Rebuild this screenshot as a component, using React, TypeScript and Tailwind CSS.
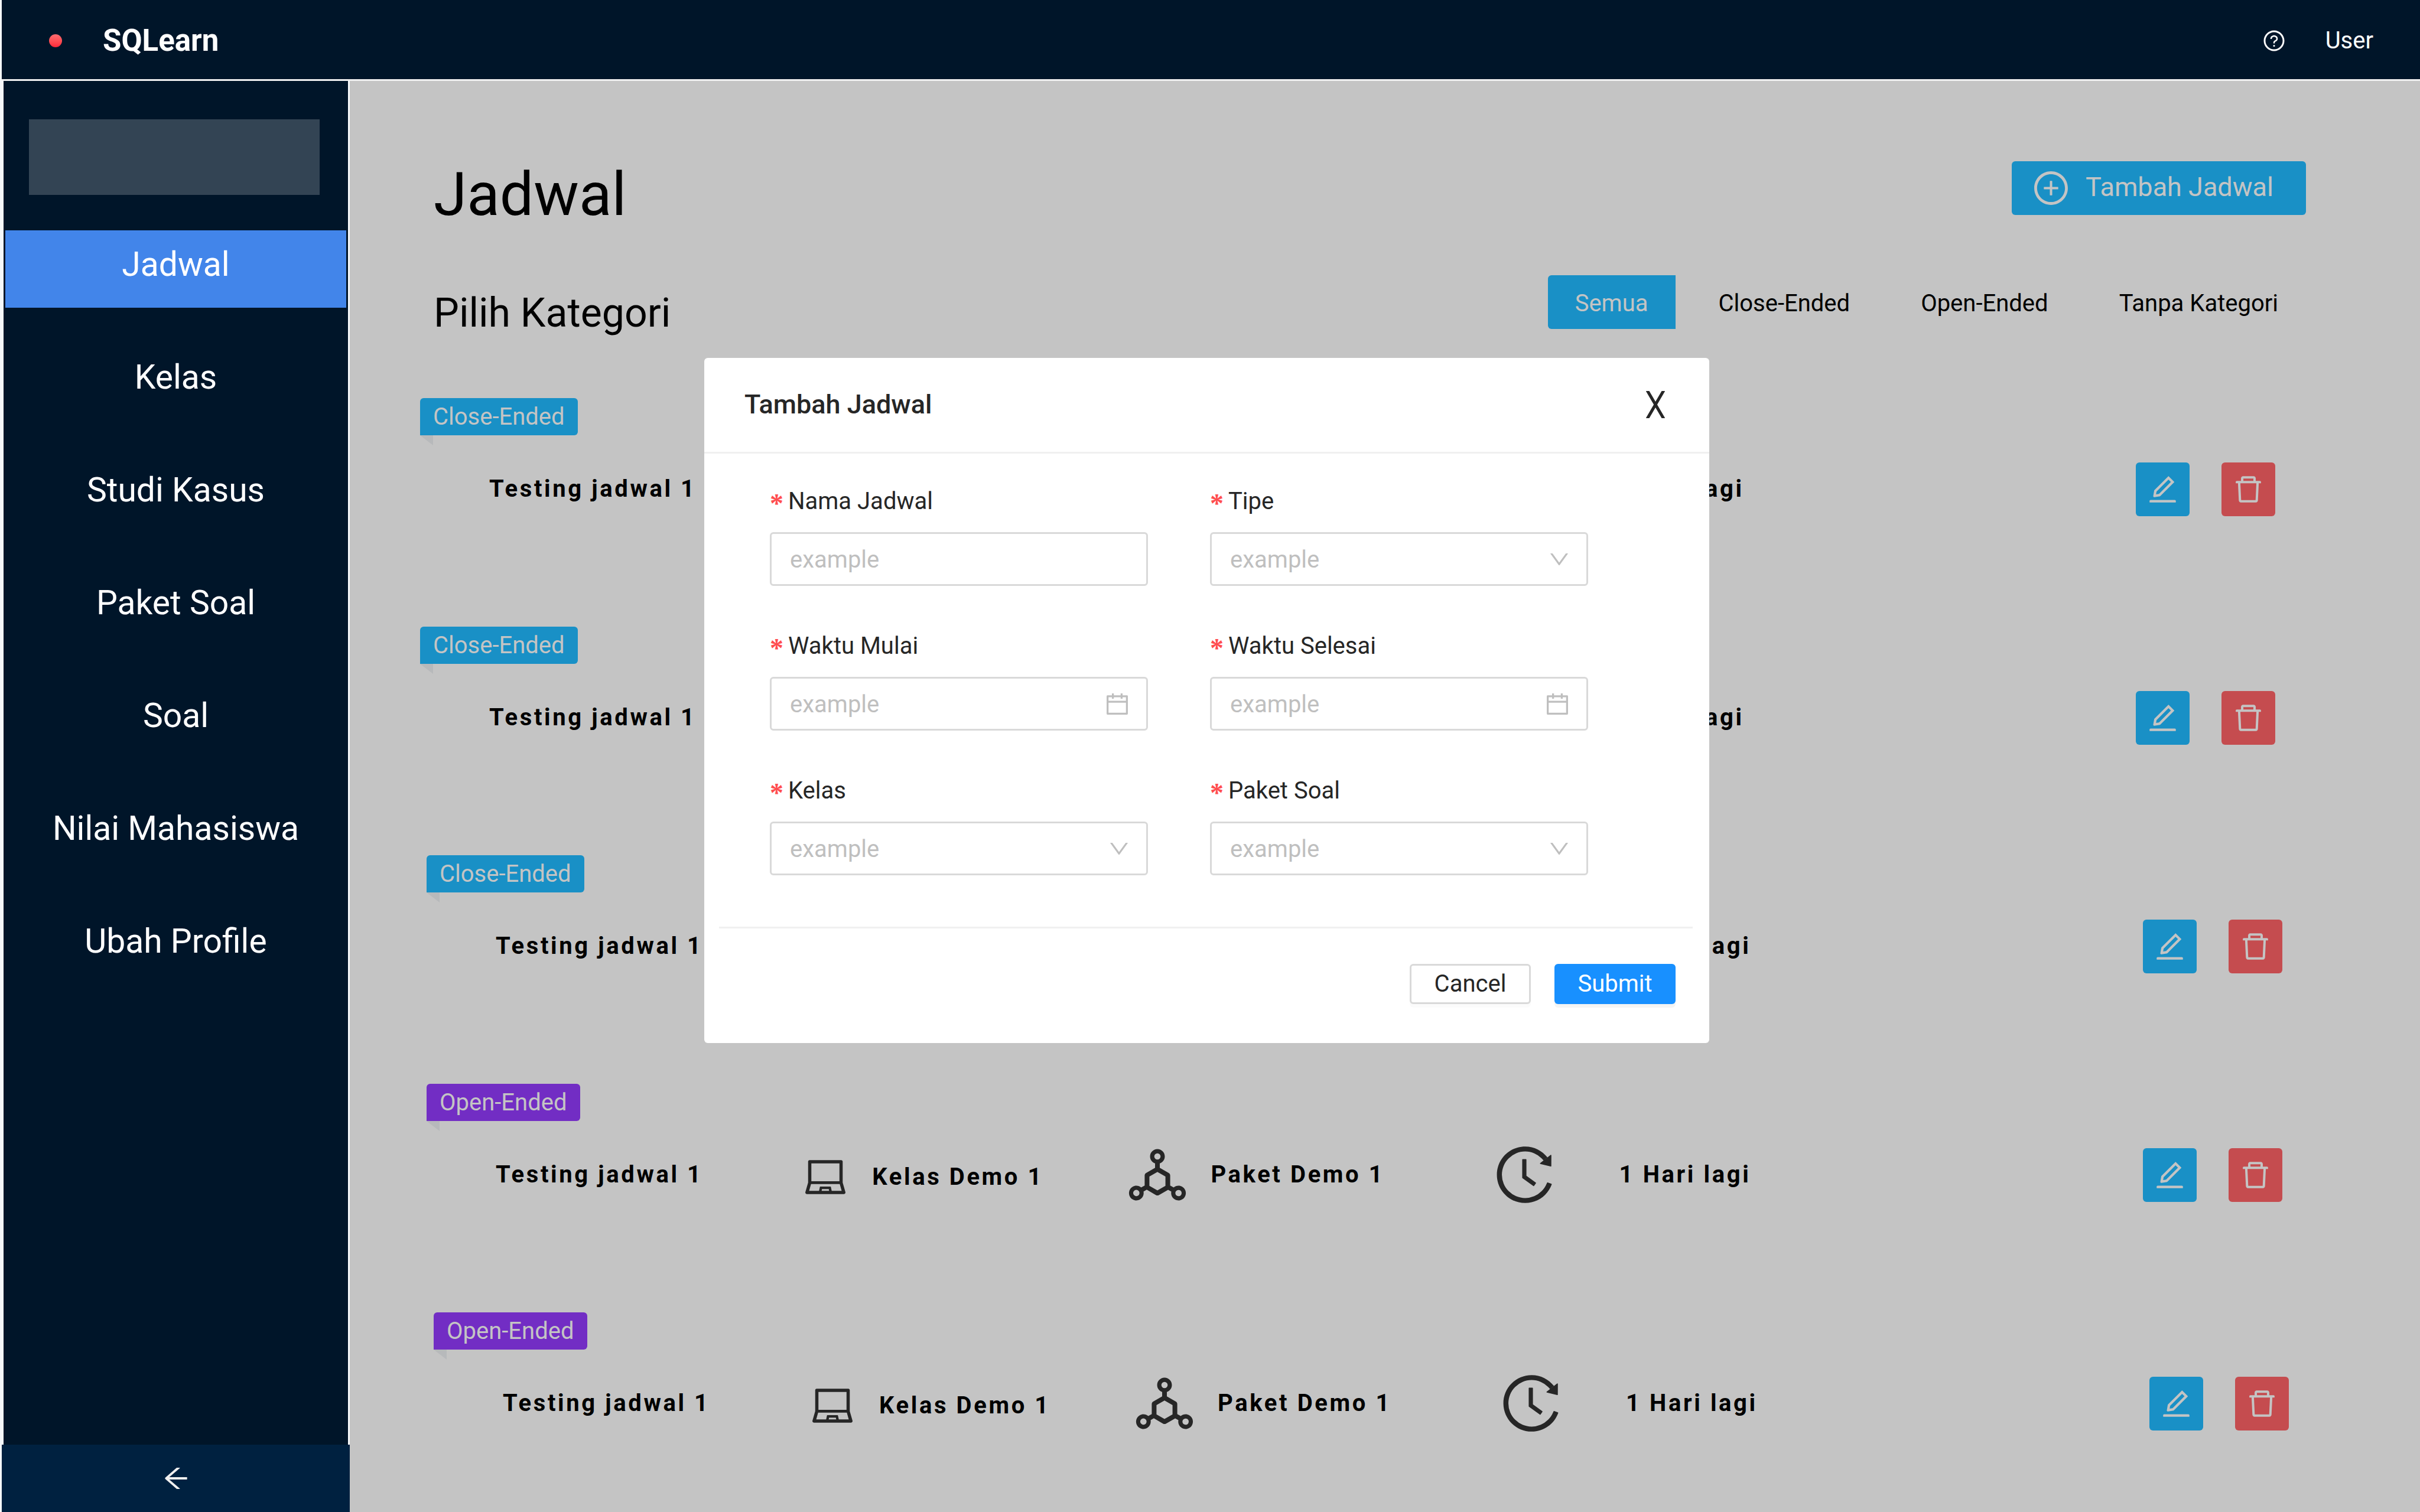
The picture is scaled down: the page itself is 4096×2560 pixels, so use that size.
import React from "react";
import {
  AiOutlineArrowLeft,
  AiOutlineCalendar,
  AiOutlineDelete,
  AiOutlineDeploymentUnit,
  AiOutlineDown,
  AiOutlineEdit,
  AiOutlineHistory,
  AiOutlineLaptop,
  AiOutlinePlusCircle,
  AiOutlineQuestionCircle,
} from "react-icons/ai";

const menu = ["Jadwal", "Kelas", "Studi Kasus", "Paket Soal", "Soal", "Nilai Mahasiswa", "Ubah Profile"];

const categories = ["Close-Ended", "Open-Ended", "Tanpa Kategori"];

type Kind = "Close-Ended" | "Open-Ended";

const schedules: { id: number; kind: Kind; inset: string }[] = [
  { id: 1, kind: "Close-Ended", inset: "pl-[119px] pr-[245px]" },
  { id: 2, kind: "Close-Ended", inset: "pl-[119px] pr-[245px]" },
  { id: 3, kind: "Close-Ended", inset: "pl-[130px] pr-[233px]" },
  { id: 4, kind: "Open-Ended", inset: "pl-[130px] pr-[233px]" },
  { id: 5, kind: "Open-Ended", inset: "pl-[142px] pr-[222px]" },
];

type Field = { id: string; label: string; type: "text" | "select" | "date" };

const fields: Field[] = [
  { id: "nama", label: "Nama Jadwal", type: "text" },
  { id: "tipe", label: "Tipe", type: "select" },
  { id: "mulai", label: "Waktu Mulai", type: "date" },
  { id: "selesai", label: "Waktu Selesai", type: "date" },
  { id: "kelas", label: "Kelas", type: "select" },
  { id: "paket", label: "Paket Soal", type: "select" },
];

function TopBar() {
  return (
    <header className="flex h-[137px] items-center justify-between border-b-[3px] border-[#f0f0f0] bg-[#001529] pt-[3px] pr-[79px] pl-20 text-white">
      <div className="flex items-center gap-[69px]">
        <span className="size-[22px] rounded-full bg-linear-to-b from-[#ff6b70] to-[#ff2438]" />
        <span className="text-[51px] leading-[60px] font-bold">SQLearn</span>
      </div>
      <div className="flex items-center gap-[67px]">
        <button type="button" aria-label="Bantuan">
          <AiOutlineQuestionCircle className="size-10" />
        </button>
        <a href="#user" className="text-[40px] leading-[60px]">
          User
        </a>
      </div>
    </header>
  );
}

function Sidebar() {
  return (
    <aside className="flex w-[589px] shrink-0 flex-col bg-[#001529]">
      <div className="flex grow flex-col border-x-[3px] border-[#f5f8fa] px-[3px] pt-[65px]">
        <div className="mr-[45px] ml-10 h-32 bg-[#334454]" />
        <nav className="mt-[60px]">
          <ul className="flex flex-col gap-[60px]">
            {menu.map((item, i) => (
              <li key={item}>
                <a
                  href={"#" + item}
                  className={
                    "flex h-[131px] items-center justify-center pb-4 text-[57px] leading-20 text-white " +
                    (i === 0 ? "bg-[#4285ea]" : "")
                  }
                >
                  {item}
                </a>
              </li>
            ))}
          </ul>
        </nav>
      </div>
      <button type="button" aria-label="Tutup menu" className="flex h-[114px] items-center justify-center bg-[#002140] text-[#f0f0f0]">
        <AiOutlineArrowLeft className="size-[52px]" />
      </button>
    </aside>
  );
}

function Tag({ kind }: { kind: Kind }) {
  return (
    <span
      className={
        "relative flex h-[63px] w-fit items-center rounded-md rounded-bl-none px-[22px] text-[40px] leading-[60px] text-[#c4c4c4] " +
        (kind === "Close-Ended" ? "bg-[#1990c6]" : "bg-[#722dc4]")
      }
    >
      {kind}
      <svg viewBox="0 0 22 17" className="absolute top-full left-0 h-[17px] w-[22px]" fill="#b7b9bb">
        <path d="M0 0H22V17Z" />
      </svg>
    </span>
  );
}

function ScheduleRow({ kind, inset }: { kind: Kind; inset: string }) {
  return (
    <li className={inset}>
      <Tag kind={kind} />
      <div className="mt-[34px] grid h-[114px] grid-cols-[636fr_544fr_620fr_1104fr_auto] items-center text-[40px] leading-[60px] font-bold tracking-[0.09em] whitespace-nowrap text-black">
        <span className="pl-[117px]">Testing jadwal 1</span>
        <span className="flex items-center gap-10 pt-2">
          <AiOutlineLaptop className="size-[78px] text-[#262626]" />
          Kelas Demo 1
        </span>
        <span className="flex items-center gap-[33px]">
          <AiOutlineDeploymentUnit className="size-[114px] text-[#262626]" />
          Paket Demo 1
        </span>
        <span className="flex items-center gap-[104px]">
          <AiOutlineHistory className="size-[114px] text-[#262626]" />
          1 Hari lagi
        </span>
        <span className="flex gap-[54px] text-[#c4c4c4]">
          <button type="button" aria-label="Ubah" className="flex size-[91px] items-center justify-center rounded-md bg-[#1990c6]">
            <AiOutlineEdit className="size-[57px]" />
          </button>
          <button type="button" aria-label="Hapus" className="flex size-[91px] items-center justify-center rounded-md bg-[#c54c4f]">
            <AiOutlineDelete className="size-[57px]" />
          </button>
        </span>
      </div>
    </li>
  );
}

function Content() {
  return (
    <main className="min-w-0 grow bg-[#c4c4c4] pt-[136px] text-black">
      <div className="flex items-start justify-between pr-[193px] pl-[142px]">
        <h1 className="text-[102px] leading-[112px]">Jadwal</h1>
        <button
          type="button"
          className="flex h-[91px] items-center gap-[26px] rounded-md bg-[#1990c6] pr-[55px] pl-[34px] text-[45px] leading-[60px] text-[#c4c4c4]"
        >
          <AiOutlinePlusCircle className="size-[65px]" />
          <span className="pb-1">Tambah Jadwal</span>
        </button>
      </div>
      <div className="mt-[81px] flex items-start justify-between pr-[180px] pl-[142px]">
        <h2 className="pt-6 text-[68px] leading-20">Pilih Kategori</h2>
        <div className="flex text-[40px] leading-[60px]">
          <button type="button" className="mr-[13px] h-[91px] rounded-l-md bg-[#1990c6] px-[46px] pt-1 text-[#c4c4c4]">
            Semua
          </button>
          {categories.map((c) => (
            <button key={c} type="button" className="h-[91px] px-[60px] pt-1">
              {c}
            </button>
          ))}
        </div>
      </div>
      <ul className="mt-[104px] flex flex-col gap-44">
        {schedules.map((s) => (
          <ScheduleRow key={s.id} kind={s.kind} inset={s.inset} />
        ))}
      </ul>
    </main>
  );
}

function FormField({ field }: { field: Field }) {
  const box =
    "h-[91px] w-full appearance-none rounded-md border-[3px] border-[#d9d9d9] bg-white px-[31px] pt-[2px] text-[40px] leading-[60px] text-[#bfbfbf] placeholder:text-[#bfbfbf]";
  return (
    <div className="flex flex-col gap-[22px]">
      <label htmlFor={field.id} className="flex h-[60px] gap-2 text-[40px] leading-[60px] text-[#262626]">
        <span className="pt-1 font-['Liberation_Serif',serif] text-[46px] font-bold text-[#ff4d4f]">*</span>
        {field.label}
      </label>
      <div className="relative">
        {field.type === "select" ? (
          <select id={field.id} className={box}>
            <option>example</option>
          </select>
        ) : (
          <input id={field.id} type="text" placeholder="example" className={box} />
        )}
        {field.type === "select" && (
          <AiOutlineDown className="pointer-events-none absolute inset-y-0 right-[29px] my-auto size-10 text-[#bfbfbf]" />
        )}
        {field.type === "date" && (
          <AiOutlineCalendar className="pointer-events-none absolute inset-y-0 right-[29px] my-auto size-[46px] text-[#bfbfbf]" />
        )}
      </div>
    </div>
  );
}

function ScheduleDialog() {
  return (
    <div className="absolute inset-x-0 top-[606px] flex justify-center pr-[11px]">
      <div role="dialog" aria-labelledby="dialog-title" className="w-[1701px] rounded-md bg-white text-[#262626]">
        <div className="flex h-[162px] items-center justify-between border-b-[3px] border-[#f0f0f0] pr-[75px] pb-[2px] pl-[68px]">
          <h2 id="dialog-title" className="text-[45px] leading-[68px] font-medium">
            Tambah Jadwal
          </h2>
          <button type="button" aria-label="Tutup">
            <svg viewBox="0 0 32 46" className="h-[46px] w-8" fill="none" stroke="currentColor" strokeWidth="5">
              <path d="M2 -1L30 47M30 -1L2 47" />
            </svg>
          </button>
        </div>
        <form>
          <div className="grid grid-cols-2 gap-x-[105px] gap-y-[72px] pt-[51px] pr-[205px] pb-[87px] pl-[111px]">
            {fields.map((f) => (
              <FormField key={f.id} field={f} />
            ))}
          </div>
          <div className="mr-7 ml-[25px] flex justify-end gap-10 border-t-[3px] border-[#f0f0f0] pt-[60px] pr-[29px] pb-[66px] text-[40px] leading-[60px]">
            <button
              type="button"
              className="flex h-[68px] w-[205px] items-center justify-center rounded-md border-[3px] border-[#d9d9d9] bg-white shadow-[0_6px_0_rgba(0,0,0,0.016)]"
            >
              Cancel
            </button>
            <button
              type="submit"
              className="flex h-[68px] w-[205px] items-center justify-center rounded-md bg-[#1890ff] text-white shadow-[0_6px_0_rgba(0,0,0,0.045)]"
            >
              Submit
            </button>
          </div>
        </form>
      </div>
    </div>
  );
}

export default function App() {
  return (
    <div className="relative flex min-h-screen flex-col bg-[#f5f8fa] pl-[3px] font-['Roboto',sans-serif]">
      <TopBar />
      <div className="flex grow">
        <Sidebar />
        <Content />
      </div>
      <ScheduleDialog />
    </div>
  );
}
